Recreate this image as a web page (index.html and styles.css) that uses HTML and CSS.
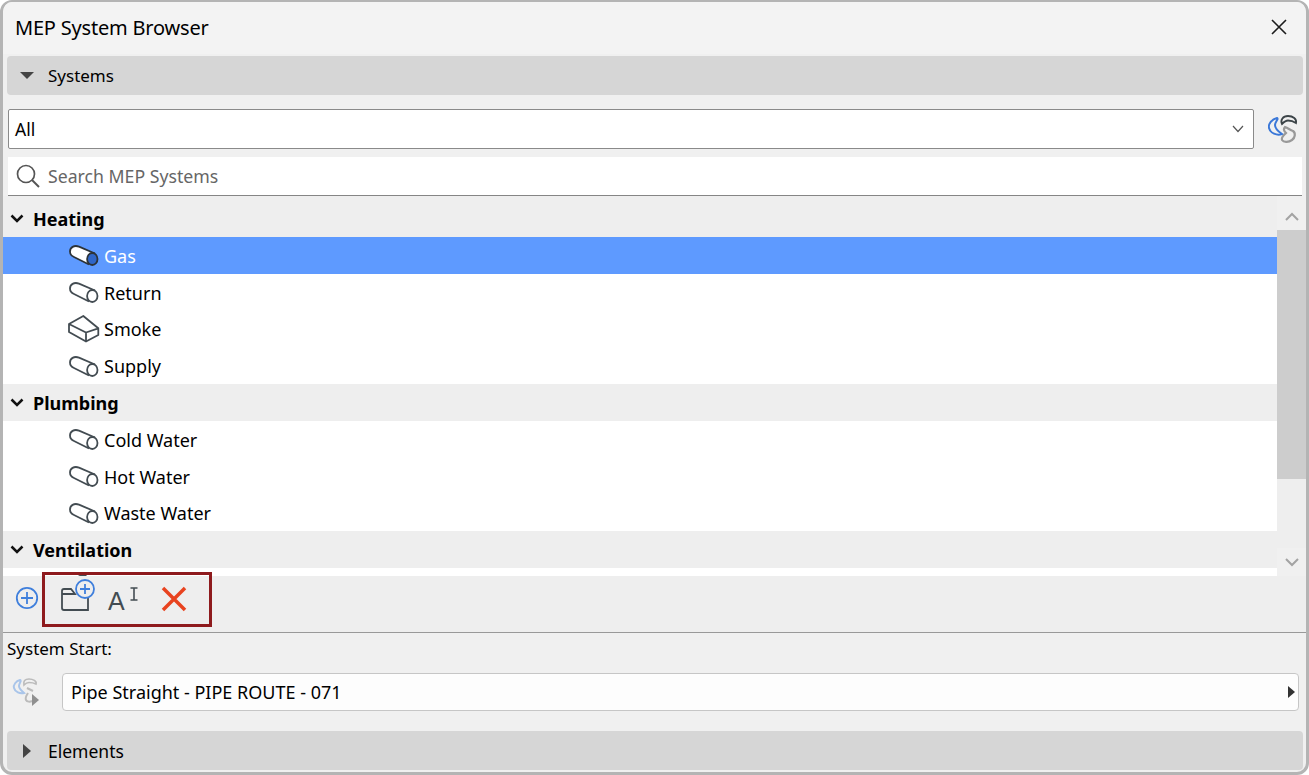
FILE: index.html
```html
<!DOCTYPE html>
<html lang="en">

<head>
    <meta charset="UTF-8">
    <title>MEP System Browser</title>
    <link rel="stylesheet" href="styles.css">
</head>

<body>
    <svg class="defs" width="0" height="0">
        <symbol id="pipe" viewBox="0 0 30 21">
            <path d="M26 8.500 L10 1.600 C5 -.2 1 2.500 1 6.500 C1 9 2.500 11 5 12 L20 19.500" fill="#fff" stroke="#434c52" stroke-width="1.800"/>
            <ellipse cx="23.300" cy="14" rx="5.200" ry="6" fill="#fff" stroke="#434c52" stroke-width="1.800"/>
        </symbol>
        <symbol id="pipe-on" viewBox="0 0 30 21">
            <path d="M26 8.500 L10 1.600 C5 -.2 1 2.500 1 6.500 C1 9 2.500 11 5 12 L20 19.500" fill="#fff" stroke="#2c3338" stroke-width="1.800"/>
            <ellipse cx="23.300" cy="14" rx="5.200" ry="6" fill="#2f66c8" stroke="#2c3338" stroke-width="1.800"/>
        </symbol>
        <symbol id="box" viewBox="0 0 32 28">
            <path d="M15.300 1 L1 9 V17 L18 26.500 L30.300 20 V13.300 Z M1 9 L18 17.500 L30.300 13.300 M18 17.500 V26.500" fill="#fff" stroke="#434c52" stroke-width="1.800" stroke-linejoin="round"/>
        </symbol>
        <symbol id="chev" viewBox="0 0 14 10">
            <path d="M1.500 1.500 L7 7 L12.500 1.500" fill="none" stroke="#111" stroke-width="2.500"/>
        </symbol>
    </svg>

    <div class="window">
        <div class="titlebar">
            <span class="title">MEP System Browser</span>
            <svg class="close" width="18" height="18" viewBox="0 0 18 18">
                <path d="M2 2 L16 16 M16 2 L2 16" stroke="#1c1c1c" stroke-width="1.600"/>
            </svg>
        </div>

        <div class="band">
            <span class="tri-down"></span>
            <span>Systems</span>
        </div>

        <div class="combo-row">
            <div class="combo">
                <span>All</span>
                <svg width="12" height="8" viewBox="0 0 12 8">
                    <path d="M1 1 L6 6.500 L11 1" fill="none" stroke="#555" stroke-width="1.200"/>
                </svg>
            </div>
            <svg class="systems-icon" width="30" height="30" viewBox="0 0 30 30">
                <path d="M9 3 C4 4 0 9 1 13 C2 18 9 21 14 19 C11 17 7 14 7 10 C7 7 11 4 9 3 Z" fill="none" stroke="#3b78d8" stroke-width="2"/>
                <path d="M14 9 C12 5 15 1 20 1 C25 1 29 4 28 8 C25 6 22 5.500 20 5.500 C18 5.500 16 7 14 9 Z" fill="none" stroke="#3c4448" stroke-width="1.800"/>
                <path d="M17 12 C20 13 22 15 25 16 C28 18 27 23 24 25 C21 27 16 28 14 25 C13 22 16 20 18 18 C16 16 15 14 17 12 Z" fill="none" stroke="#999" stroke-width="2.200"/>
            </svg>
        </div>

        <div class="search">
            <svg width="26" height="26" viewBox="0 0 26 26">
                <circle cx="11" cy="11" r="8.500" fill="none" stroke="#555" stroke-width="1.700"/>
                <path d="M17 17 L24 24" stroke="#555" stroke-width="2"/>
            </svg>
            <span>Search MEP Systems</span>
        </div>

        <div class="tree-wrap">
            <div class="tree">
                <div class="group first"><svg class="chev"><use href="#chev"/></svg>Heating</div>
                <div class="item selected"><svg class="pipe"><use href="#pipe-on"/></svg>Gas</div>
                <div class="item"><svg class="pipe"><use href="#pipe"/></svg>Return</div>
                <div class="item"><svg class="pipe box"><use href="#box"/></svg>Smoke</div>
                <div class="item"><svg class="pipe"><use href="#pipe"/></svg>Supply</div>
                <div class="group"><svg class="chev"><use href="#chev"/></svg>Plumbing</div>
                <div class="item"><svg class="pipe"><use href="#pipe"/></svg>Cold Water</div>
                <div class="item"><svg class="pipe"><use href="#pipe"/></svg>Hot Water</div>
                <div class="item"><svg class="pipe"><use href="#pipe"/></svg>Waste Water</div>
                <div class="group"><svg class="chev"><use href="#chev"/></svg>Ventilation</div>
                <div class="item"><svg class="pipe box"><use href="#box"/></svg></div>
            </div>
            <div class="scrollbar">
                <div class="arrow up">
                    <svg width="14" height="9" viewBox="0 0 14 9"><path d="M1 8 L7 2 L13 8" fill="none" stroke="#a3a3a3" stroke-width="2"/></svg>
                </div>
                <div class="thumb"></div>
                <div class="rest"></div>
                <div class="arrow down">
                    <svg width="14" height="9" viewBox="0 0 14 9"><path d="M1 1 L7 7 L13 1" fill="none" stroke="#a3a3a3" stroke-width="2"/></svg>
                </div>
            </div>
        </div>

        <div class="toolbar">
            <svg class="add" width="24" height="24" viewBox="0 0 24 24">
                <circle cx="12" cy="12" r="10.200" fill="none" stroke="#3f7fdc" stroke-width="1.800"/>
                <path d="M12 6 V18 M6 12 H18" stroke="#3f7fdc" stroke-width="1.800"/>
            </svg>
            <svg class="folder" width="38" height="34" viewBox="0 0 38 34">
                <path d="M2 16 V12 Q2 10 4 10 H11 L15 15 H2 M2 15 V29 Q2 31 4 31 H28 V18" fill="none" stroke="#434c52" stroke-width="1.800"/>
                <circle cx="25" cy="10" r="9" fill="#eee" stroke="#3f7fdc" stroke-width="1.800"/>
                <path d="M25 5 V15 M20 10 H30" stroke="#3f7fdc" stroke-width="1.800"/>
            </svg>
            <span class="rename">
                <span class="rename-a">A</span>
                <svg width="10" height="14" viewBox="0 0 10 14">
                    <path d="M1.500 1 H8.500 M5 1 V13 M1.500 13 H8.500" fill="none" stroke="#434c52" stroke-width="1.600"/>
                </svg>
            </span>
            <svg class="delete" width="26" height="26" viewBox="0 0 26 26">
                <path d="M2 2 L24 24 M24 2 L2 24" stroke="#e8431f" stroke-width="3.500"/>
            </svg>
            <div class="highlight"></div>
        </div>

        <div class="start">
            <div class="start-label">System Start:</div>
            <div class="start-row">
                <svg class="start-icon" width="30" height="30" viewBox="0 0 30 30">
                    <path d="M8 3 C4 4 1 8 2 11 C3 15 8 17 12 16 C10 14 7 12 7 9 C7 6 10 4 8 3 Z" fill="none" stroke="#a9c5ea" stroke-width="2"/>
                    <path d="M12 8 C11 4 13 2 17 2 C21 2 25 4 24 7 C22 6 19 5.500 17 5.500 C15 5.500 14 6 12 8 Z" fill="none" stroke="#bbb" stroke-width="1.700"/>
                    <path d="M15 11 C17 12 19 13 21 14 M16 16 C14 19 13 21 14 23 C15 25 18 25 20 24" fill="none" stroke="#bbb" stroke-width="2"/>
                    <path d="M20 17 L27 23 L20 29 Z" fill="#8f8f8f"/>
                </svg>
                <div class="field">
                    <span>Pipe Straight - PIPE ROUTE - 071</span>
                    <span class="tri-right small"></span>
                </div>
            </div>
        </div>

        <div class="band bottom">
            <span class="tri-right"></span>
            <span>Elements</span>
        </div>
    </div>
</body>

</html>
```

FILE: styles.css
```css
* {
    box-sizing: border-box;
}

html,
body {
    margin: 0;
    height: 775px;
    overflow: hidden;
}

body {
    background: #fff;
    font-family: "Noto Sans", "Open Sans", sans-serif;
    color: #000;
}

.defs {
    display: none;
}

.window {
    position: relative;
    width: 1309px;
    height: 775px;
    background: #f0f0f0;
    border: 3px solid #b4b4b4;
    border-top-width: 2px;
    border-radius: 12px;
    overflow: hidden;
}

.titlebar {
    height: 52px;
    display: flex;
    align-items: center;
    justify-content: space-between;
    padding: 0 18px 2px 12px;
    background: #f3f3f3;
}

.title {
    font-size: 20px;
    letter-spacing: -0.2px;
}

.band {
    height: 39px;
    margin: 2px 3px 0 4px;
    display: flex;
    align-items: center;
    gap: 14px;
    padding-left: 13px;
    background: #d6d6d6;
    border-radius: 4px;
    font-size: 17px;
}

.tri-down {
    width: 0;
    height: 0;
    border-left: 7px solid transparent;
    border-right: 7px solid transparent;
    border-top: 7px solid #444;
}

.tri-right {
    width: 0;
    height: 0;
    margin: 0 3px 0 3px;
    border-top: 7px solid transparent;
    border-bottom: 7px solid transparent;
    border-left: 8px solid #444;
}

.tri-right.small {
    margin: 0;
    border-top-width: 6px;
    border-bottom-width: 6px;
    border-left-width: 7px;
    border-left-color: #333;
}

.combo-row {
    margin-top: 14px;
    height: 40px;
    display: flex;
    align-items: center;
    gap: 14px;
    padding-left: 5px;
}

.combo {
    width: 1246px;
    height: 40px;
    display: flex;
    align-items: center;
    justify-content: space-between;
    padding: 0 9px 0 6px;
    background: #fff;
    border: 1px solid #8a8a8a;
    border-radius: 2px;
    font-size: 17.5px;
}

.systems-icon {
    margin-top: 2px;
}

.search {
    margin: 8px 4px 0 5px;
    height: 39px;
    display: flex;
    align-items: center;
    gap: 7px;
    padding-left: 7px;
    background: #fff;
    border-bottom: 1px solid #858585;
    font-size: 17.7px;
    color: #666;
}

.tree-wrap {
    height: 380px;
    display: flex;
}

.tree {
    width: 1274px;
    height: 380px;
    overflow: hidden;
    background: #fff;
}

.group,
.item {
    height: 36.8px;
    display: flex;
    align-items: center;
}

.group {
    padding-left: 7px;
    gap: 9px;
    background: #eee;
    font-size: 18px;
    font-weight: 700;
}

.group.first {
    height: 41px;
    padding-top: 4px;
}

.chev {
    width: 14px;
    height: 10px;
}

.item {
    padding: 1px 0 0 66px;
    gap: 5px;
    background: #fff;
    font-size: 18px;
}

.item.selected {
    background: #5e9aff;
    color: #fff;
}

.pipe {
    width: 30px;
    height: 21px;
    flex: none;
}

.pipe.box {
    width: 32px;
    height: 28px;
    margin-left: -1px;
    margin-right: -1px;
}

.scrollbar {
    width: 29px;
    display: flex;
    flex-direction: column;
    background: #f0f0f0;
}

.arrow {
    display: flex;
    align-items: center;
    justify-content: center;
    flex: none;
}

.arrow.up {
    height: 34px;
    padding-top: 6px;
}

.arrow.down {
    height: 28px;
}

.thumb {
    height: 249px;
    background: #cdcdcd;
}

.rest {
    flex: 1;
    background: #eee;
}

.toolbar {
    position: relative;
    height: 57px;
    display: flex;
    align-items: flex-start;
    background: #eee;
    border-bottom: 1px solid #999;
}

.add {
    margin: 10px 0 0 12px;
    flex: none;
}

.folder {
    margin: 3px 0 0 21px;
    flex: none;
}

.rename {
    display: flex;
    align-items: flex-start;
    margin: 10px 0 0 10px;
    width: 32px;
    color: #434c52;
}

.rename-a {
    font-family: "Liberation Sans", sans-serif;
    font-size: 25px;
    line-height: 30px;
}

.rename svg {
    margin: 1px 0 0 4px;
}

.delete {
    margin: 10px 0 0 21px;
    flex: none;
}

.highlight {
    position: absolute;
    left: 39px;
    top: -4px;
    width: 170px;
    height: 55px;
    border: 3px solid #8e1a1d;
}

.start {
    height: 98px;
    padding: 5px 7px 0 4px;
}

.start-label {
    font-size: 17px;
    line-height: 22px;
}

.start-row {
    margin-top: 13px;
    display: flex;
    align-items: center;
    gap: 20px;
}

.start-icon {
    margin-left: 5px;
    flex: none;
}

.field {
    flex: 1;
    height: 38px;
    display: flex;
    align-items: center;
    justify-content: space-between;
    padding: 0 3px 0 8px;
    background: #fdfdfd;
    border: 1px solid #c6c6c6;
    border-radius: 4px;
    font-size: 18px;
}

.band.bottom {
    margin-top: 0;
    font-size: 17.5px;
}
```
